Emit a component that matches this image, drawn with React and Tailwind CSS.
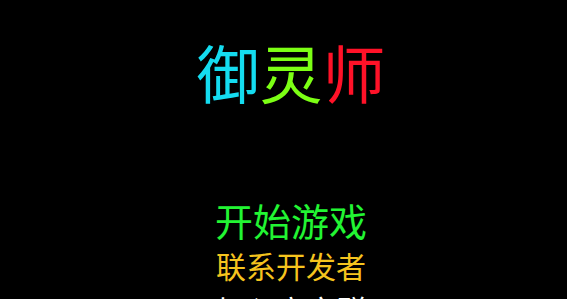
import React from 'react';

const font = { fontFamily: '"Noto Sans CJK SC", "Noto Sans", sans-serif' };

export default function App() {
  return (
    <div className="w-[567px] h-[299px] bg-black overflow-hidden" style={font}>
      <div className="flex flex-col items-center pl-[15px]">
        <h1 className="flex mt-[31px] text-[63px] leading-[80px] font-normal">
          <span className="text-[#14dcf0]">御</span>
          <span className="text-[#7cff14]">灵</span>
          <span className="text-[#ff1228]">师</span>
        </h1>
        <div className="flex flex-col items-center mt-[86px]">
          <button className="text-[38px] leading-[46px] text-[#22f533]">开始游戏</button>
          <button className="text-[30px] leading-[44px] text-[#f5c41e]">联系开发者</button>
          <button className="text-[30px] leading-[44px] text-white">加入官方群</button>
        </div>
      </div>
    </div>
  );
}
